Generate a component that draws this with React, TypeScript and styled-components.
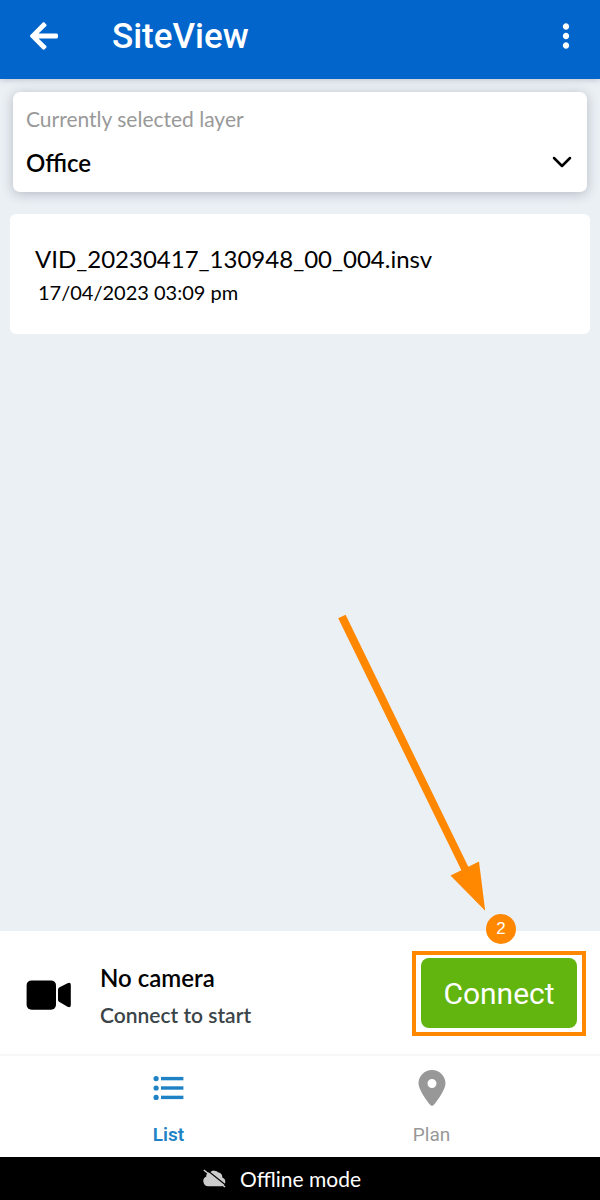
import React from "react";
import styled, { createGlobalStyle } from "styled-components";
import { FaArrowLeft } from "react-icons/fa";
import { FaLocationDot } from "react-icons/fa6";
import { MdMoreVert } from "react-icons/md";

const GlobalStyle = createGlobalStyle`
  *, *::before, *::after { box-sizing: border-box; }
  body { margin: 0; background: #ebf0f5; }
  h1, h2, p { margin: 0; }
  button, select { font: inherit; }
`;

const Screen = styled.div`
  display: flex;
  flex-direction: column;
  min-height: 100vh;
  font-family: Lato, "Liberation Sans", sans-serif;
  color: #000;
`;

const TopBar = styled.header`
  display: flex;
  align-items: center;
  height: 79px;
  padding: 0 14px 8px 24px;
  background: #0265cb;
  box-shadow: 0 1px 6px rgba(60, 60, 80, 0.25);
  color: #fff;
`;

const IconButton = styled.button`
  display: flex;
  align-items: center;
  justify-content: center;
  width: 40px;
  height: 40px;
  padding: 0;
  border: 0;
  background: none;
  color: inherit;
  cursor: pointer;
`;

const Title = styled.h1`
  flex: 1;
  padding: 2px 0 0 48px;
  font: 500 35px/40px Roboto, sans-serif;
`;

const Content = styled.main`
  flex: 1;
  display: flex;
  flex-direction: column;
  gap: 22px;
  padding: 13px 10px;
`;

const LayerCard = styled.div`
  display: flex;
  flex-direction: column;
  gap: 11px;
  margin: 0 3px;
  padding: 13px 13px 12px;
  border-radius: 7px;
  background: #fff;
  box-shadow: 0 2px 12px rgba(60, 60, 80, 0.3);
`;

const LayerLabel = styled.label`
  font-size: 21px;
  line-height: 28px;
  color: #999;
`;

const SelectRow = styled.div`
  display: grid;
  align-items: center;

  > * {
    grid-area: 1 / 1;
  }
`;

const LayerSelect = styled.select`
  appearance: none;
  width: 100%;
  height: 36px;
  padding: 0;
  border: 0;
  background: none;
  color: #000;
  font-size: 24px;
  font-weight: 600;
`;

const Chevron = styled.svg`
  justify-self: end;
  margin-right: 1px;
  pointer-events: none;
`;

const FileCard = styled.article`
  display: flex;
  flex-direction: column;
  gap: 3px;
  padding: 29px 25px 28px;
  border-radius: 6px;
  background: #fff;
`;

const FileName = styled.h2`
  font-size: 24px;
  font-weight: 400;
  line-height: 32px;
`;

const FileDate = styled.p`
  padding-left: 3px;
  font-size: 20px;
  line-height: 28px;
`;

const CameraPanel = styled.section`
  display: flex;
  align-items: center;
  height: 125px;
  padding: 2px 14px 0 26px;
  border-bottom: 2px solid #f7f7f8;
  background: #fff;
`;

const CameraInfo = styled.div`
  flex: 1;
  display: flex;
  flex-direction: column;
  gap: 8px;
  padding: 4px 0 0 28px;
`;

const CameraState = styled.h2`
  font-size: 24px;
  font-weight: 600;
  line-height: 30px;
`;

const CameraHint = styled.p`
  font-size: 21px;
  font-weight: 600;
  line-height: 28px;
  color: #3a4449;
`;

const Highlight = styled.div`
  position: relative;
  padding: 3px 5px 4px;
  border: 4px solid #ff8800;
`;

const ConnectButton = styled.button`
  display: block;
  width: 156px;
  height: 70px;
  padding: 2px 0 0;
  border: 0;
  border-radius: 8px;
  background: #62b40f;
  color: #fff;
  font: 400 30px/40px Roboto, sans-serif;
  cursor: pointer;
`;

const StepBadge = styled.span`
  position: absolute;
  right: 66px;
  bottom: 88px;
  width: 30px;
  height: 30px;
  border-radius: 50%;
  background: #ff8800;
  color: #fff;
  font: 400 17px/30px "Liberation Sans", sans-serif;
  text-align: center;
`;

const StepArrow = styled.svg`
  position: absolute;
  right: 96px;
  bottom: 121px;
  pointer-events: none;
`;

const TabBar = styled.nav`
  display: flex;
  padding: 0 37px;
  background: #fff;
`;

const Tab = styled.a<{ $active?: boolean }>`
  flex: 1;
  display: flex;
  flex-direction: column;
  align-items: center;
  gap: 16px;
  padding: 14px 0 9px;
  color: ${(p) => (p.$active ? "#1e82c4" : "#989898")};
  font: ${(p) => (p.$active ? 600 : 400)} 19px/26px Roboto, sans-serif;
  text-decoration: none;

  svg {
    height: 36px;
  }
`;

const OfflineBar = styled.footer`
  display: flex;
  align-items: center;
  justify-content: center;
  gap: 14px;
  height: 43px;
  padding: 0 36px 0 0;
  background: #000;
  color: #fff;
  font-size: 21px;
  line-height: 28px;
`;

const ListIcon = () => (
  <svg width="32" height="36" viewBox="0 0 32 36" fill="currentColor" aria-hidden="true">
    {[8.6, 18, 27.4].map((y) => (
      <React.Fragment key={y}>
        <circle cx="3.1" cy={y} r="2.6" />
        <rect x="8" y={y - 1.7} width="22.4" height="3.4" />
      </React.Fragment>
    ))}
  </svg>
);

const CameraIcon = () => (
  <svg width="46" height="32" viewBox="0 -2 46 32" aria-hidden="true">
    <rect x="0.6" y="0.4" width="29.4" height="29.4" rx="5" />
    <path d="M32 9.700Q32 8.400 33.100 7.600L41.500 3.200Q44.800 2 44.800 5V25Q44.800 28.200 41.500 26.800L33.100 21.800Q32 21 32 19.700Z" />
  </svg>
);

const CloudOffIcon = () => (
  <svg width="23" height="19" viewBox="0 0 23 19" aria-hidden="true">
    <path
      d="M5.600 17.200A5 5 0 0 1 3.400 7.600A3.600 3.600 0 0 1 7 3.200A6 6 0 0 1 15.500 3.600A4.200 4.200 0 0 1 19.200 8.600A4.500 4.500 0 0 1 19 17.200Z"
      fill="#ccc"
    />
    <path d="M2 -0.500L23 16.200" stroke="#000" strokeWidth="1.200" />
    <path d="M0.800 1L22 18" stroke="#ccc" strokeWidth="1.600" />
  </svg>
);

export default function App() {
  return (
    <Screen>
      <GlobalStyle />
      <TopBar>
        <IconButton aria-label="Back">
          <FaArrowLeft size={32} />
        </IconButton>
        <Title>SiteView</Title>
        <IconButton aria-label="More options">
          <MdMoreVert size={38} />
        </IconButton>
      </TopBar>

      <Content>
        <LayerCard>
          <LayerLabel htmlFor="layer">Currently selected layer</LayerLabel>
          <SelectRow>
            <LayerSelect id="layer" defaultValue="office">
              <option value="office">Office</option>
            </LayerSelect>
            <Chevron width="22" height="14" viewBox="0 0 22 14" aria-hidden="true">
              <path
                d="M3 3L11 11L19 3"
                fill="none"
                stroke="#000"
                strokeWidth="2.500"
                strokeLinecap="round"
                strokeLinejoin="round"
              />
            </Chevron>
          </SelectRow>
        </LayerCard>

        <FileCard>
          <FileName>VID_20230417_130948_00_004.insv</FileName>
          <FileDate>17/04/2023 03:09 pm</FileDate>
        </FileCard>
      </Content>

      <CameraPanel>
        <CameraIcon />
        <CameraInfo>
          <CameraState>No camera</CameraState>
          <CameraHint>Connect to start</CameraHint>
        </CameraInfo>
        <Highlight>
          <ConnectButton>Connect</ConnectButton>
          <StepBadge>2</StepBadge>
          <StepArrow width="150" height="298" viewBox="0 0 150 298" aria-hidden="true">
            <path
              d="M2.200 5.200L9.600 1.800L132.300 253.800L143 248.500L149.200 297.700L114.500 262.500L125.400 257.200Z"
              fill="#ff8800"
            />
          </StepArrow>
        </Highlight>
      </CameraPanel>

      <TabBar>
        <Tab href="#list" $active aria-current="page">
          <ListIcon />
          List
        </Tab>
        <Tab href="#plan">
          <FaLocationDot size={36} />
          Plan
        </Tab>
      </TabBar>

      <OfflineBar>
        <CloudOffIcon />
        Offline mode
      </OfflineBar>
    </Screen>
  );
}
